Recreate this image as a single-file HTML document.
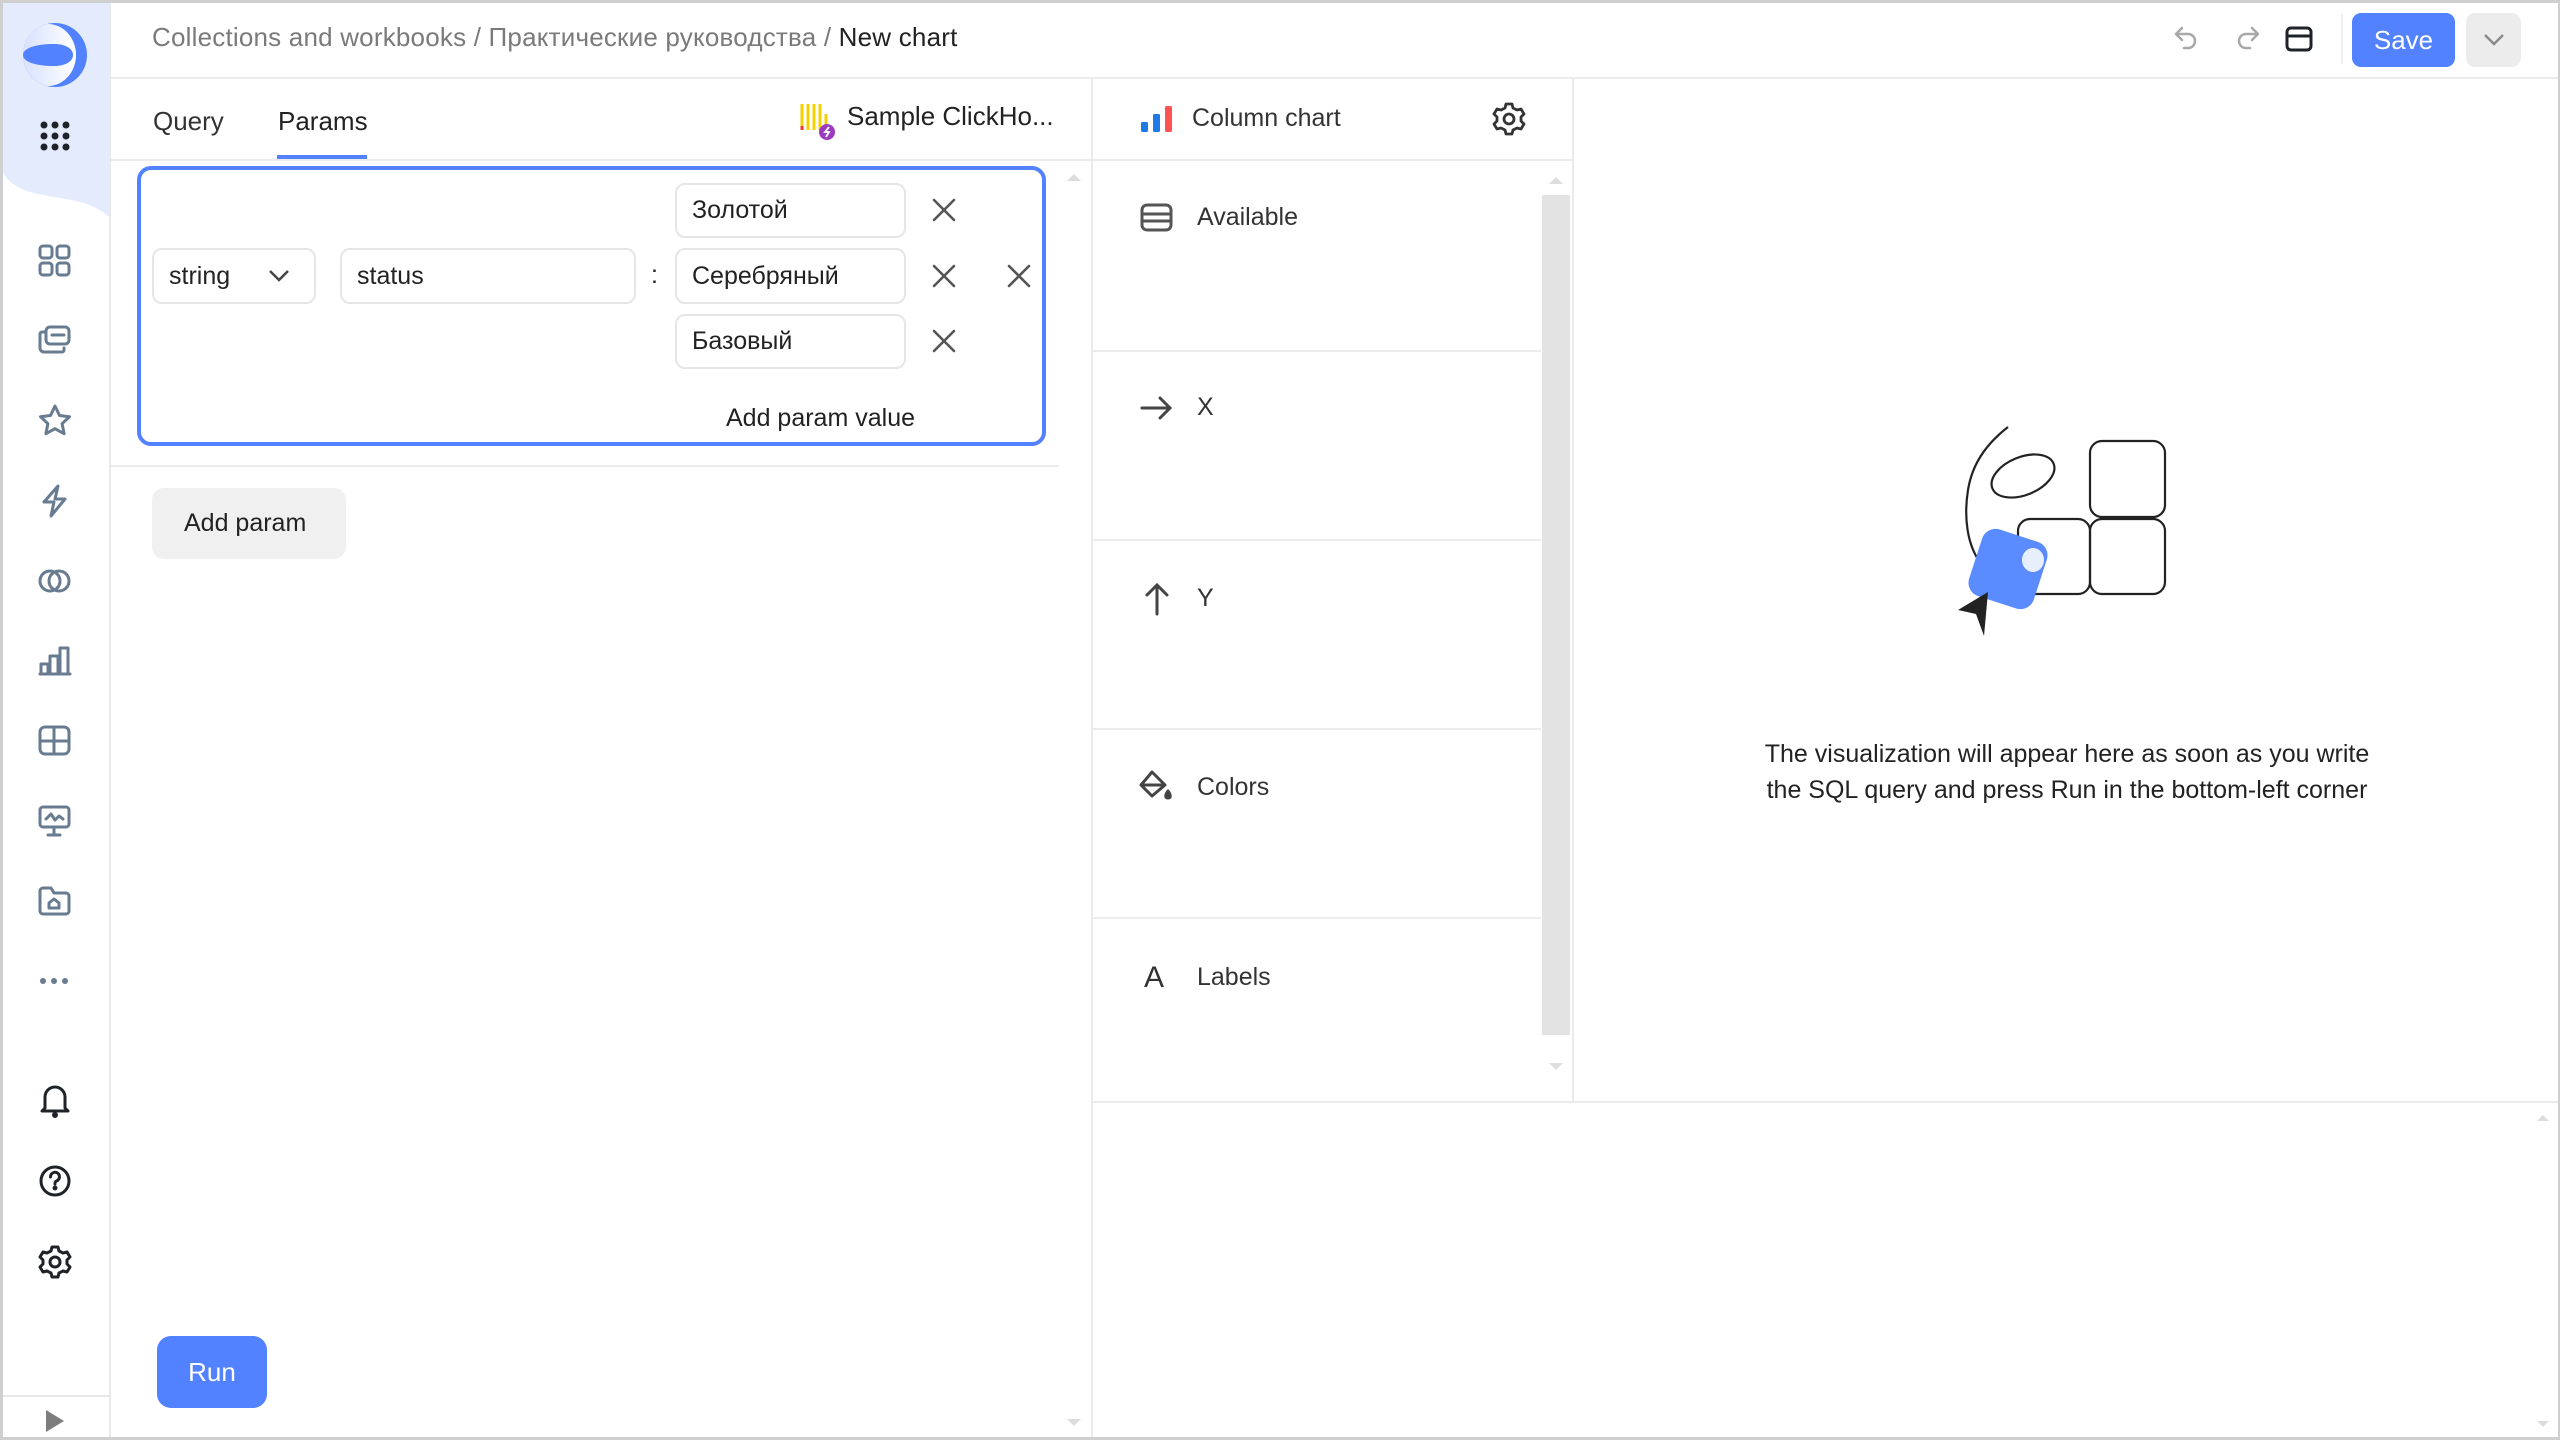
<!DOCTYPE html>
<html><head><meta charset="utf-8"><style>
*{box-sizing:border-box;margin:0;padding:0}
body{width:2560px;height:1440px;overflow:hidden;background:#fff;font-family:"Liberation Sans","Noto Sans CJK SC",sans-serif;color:#222;position:relative}
.frame{position:absolute;left:0;top:0;width:2560px;height:1440px;border:3px solid #cfcfcf;border-right-width:2px;pointer-events:none;z-index:50}
.a{position:absolute}
.t{position:absolute;white-space:nowrap;font-size:25px;line-height:1}
.inp{position:absolute;border:2px solid #e6e6e6;border-radius:10px;background:#fff}
.sec{position:absolute;left:1092px;width:449px;border-bottom:2px solid #ececec}
</style></head><body>
<div class="frame"></div>
<!-- sidebar -->
<div class="a" style="left:0;top:0;width:111px;height:1440px;border-right:2px solid #e8e8e8"></div>
<svg class="a" style="left:0;top:0" width="111" height="230"><path d="M0 0H110V218C90 198 60 200 30 192C10 186 3 175 0 165Z" fill="#e4ebfd"/></svg>
<svg class="a" style="left:22px;top:22px" width="66" height="66" viewBox="0 0 66 66"><defs><linearGradient id="g" x1="0" y1="0" x2="1" y2="0"><stop offset="0" stop-color="#d6e0ff"/><stop offset="1" stop-color="#ffffff"/></linearGradient><clipPath id="c"><circle cx="33" cy="33" r="32"/></clipPath></defs><circle cx="33" cy="33" r="32" fill="#5282ff"/><g clip-path="url(#c)"><ellipse cx="26" cy="33" rx="28" ry="31" fill="url(#g)"/></g><path d="M1 33C1 26 14 22 32 22C44 22 51 27 51 33C51 39 44 44 32 44C14 44 1 40 1 33Z" fill="#5282ff"/></svg>
<svg class="a" style="left:40px;top:121px" width="30" height="30"><g fill="#1f2328"><circle cx="4" cy="4" r="3.5"/><circle cx="15" cy="4" r="3.5"/><circle cx="26" cy="4" r="3.5"/><circle cx="4" cy="15" r="3.5"/><circle cx="15" cy="15" r="3.5"/><circle cx="26" cy="15" r="3.5"/><circle cx="4" cy="26" r="3.5"/><circle cx="15" cy="26" r="3.5"/><circle cx="26" cy="26" r="3.5"/></g></svg>
<svg class="a" style="left:38px;top:244px" width="34" height="1040" fill="none" stroke="#687c91" stroke-width="3" stroke-linecap="round" stroke-linejoin="round">
<rect x="2" y="2" width="12" height="12" rx="3"/><rect x="19" y="2" width="12" height="12" rx="3"/><rect x="2" y="19" width="12" height="12" rx="3"/><rect x="19" y="19" width="12" height="12" rx="3"/>
<g transform="translate(0,80)"><path d="M8 8H4a2 2 0 0 0-2 2v14a4 4 0 0 0 4 4h18a2 2 0 0 0 2-2v-2"/><rect x="8" y="3" width="23" height="17" rx="4"/><path d="M14 11H26"/></g>
<g transform="translate(0,160)"><path d="M17 2l4.5 9.5 10 1.2-7.4 7 2 10-9.1-5-9.1 5 2-10-7.4-7 10-1.2z"/></g>
<g transform="translate(0,240)"><path d="M20 2L6 18h10l-3 14 14-17H17l3-13z"/></g>
<g transform="translate(0,320)"><circle cx="12" cy="17" r="10"/><circle cx="21" cy="17" r="10"/></g>
<g transform="translate(0,400)"><path d="M3 30V20h7v10M12 30V12h8v18M22 30V4h8v26M2 30h30"/></g>
<g transform="translate(0,480)"><rect x="2" y="3" width="29" height="27" rx="5"/><path d="M2 17h29M16 3v27"/></g>
<g transform="translate(0,560)"><rect x="2" y="3" width="29" height="20" rx="3"/><path d="M8 15l5-5 4 6 4-4 4 3M16 23v7M10 31h12"/></g>
<g transform="translate(0,640)"><path d="M2 10V27a3 3 0 0 0 3 3h23a3 3 0 0 0 3-3V12a3 3 0 0 0-3-3H16l-3-5H5a3 3 0 0 0-3 3z"/><path d="M11 24v-5l5-4 5 4v5z"/></g>
<g transform="translate(0,720)" fill="#687c91" stroke="none"><circle cx="5" cy="17" r="3"/><circle cx="16" cy="17" r="3"/><circle cx="27" cy="17" r="3"/></g>
</svg>
<svg class="a" style="left:38px;top:1084px" width="34" height="200" fill="none" stroke="#1f2328" stroke-width="3" stroke-linecap="round" stroke-linejoin="round">
<path d="M7 24V13a10 10 0 0 1 20 0v11l3 3H4z"/><circle cx="17" cy="31" r="1.5" fill="#1f2328"/>
<g transform="translate(0,80)"><circle cx="17" cy="17" r="14"/><path d="M12.5 13a4.5 4.5 0 1 1 6 4c-1.5.6-1.5 1.5-1.5 3"/><circle cx="17" cy="24" r="1" fill="#1f2328"/></g>
<g transform="translate(0,160)"><path d="M14 3h6l1 4 4 2 4-1 3 5-3 3v4l3 3-3 5-4-1-4 2-1 4h-6l-1-4-4-2-4 1-3-5 3-3v-4l-3-3 3-5 4 1 4-2z"/><circle cx="17" cy="18" r="5"/></g>
</svg>
<div class="a" style="left:0;top:1395px;width:111px;height:2px;background:#e8e8e8"></div>
<svg class="a" style="left:46px;top:1410px" width="20" height="22"><path d="M0 0L18 11L0 22Z" fill="#7d7d7d"/></svg>
<!-- header -->
<div class="a" style="left:111px;top:77px;width:2449px;height:2px;background:#ebebeb"></div>
<div class="t" style="left:152px;top:24px;color:#7a7a7a;font-size:26px;letter-spacing:0.2px">Collections and workbooks / Практические руководства / <span style="color:#222">New chart</span></div>
<svg class="a" style="left:2172px;top:24px" width="150" height="30" fill="none" stroke-width="2.5" stroke-linecap="round" stroke-linejoin="round">
<path d="M6 10h10a7 7 0 0 1 0 14h-4M10 4L4 10l6 6" stroke="#a8a8a8"/>
<path d="M84 10H74a7 7 0 0 0 0 14h4M80 4l6 6-6 6" stroke="#a8a8a8"/>
<rect x="115" y="4" width="24" height="22" rx="4" stroke="#1f2328" stroke-width="3"/><path d="M115 12h24" stroke="#1f2328" stroke-width="3"/>
</svg>
<div class="a" style="left:2341px;top:14px;width:2px;height:50px;background:#eee"></div>
<div class="a" style="left:2352px;top:13px;width:103px;height:54px;background:#5282ff;border-radius:9px;color:#fff;font-size:26px;line-height:54px;text-align:center">Save</div>
<div class="a" style="left:2466px;top:13px;width:55px;height:54px;background:#ececec;border-radius:9px"></div>
<svg class="a" style="left:2483px;top:32px" width="22" height="16"><path d="M2 3l9 9 9-9" fill="none" stroke="#8a8a8a" stroke-width="2.5"/></svg>
<!-- left panel -->
<div class="a" style="left:1091px;top:79px;width:2px;height:1361px;background:#ebebeb"></div>
<div class="a" style="left:111px;top:159px;width:980px;height:2px;background:#ebebeb"></div>
<div class="t" style="left:153px;top:108px;font-size:26px;color:#333">Query</div>
<div class="t" style="left:278px;top:108px;font-size:26px;color:#222">Params</div>
<div class="a" style="left:277px;top:155px;width:90px;height:4px;background:#5282ff"></div>
<svg class="a" style="left:798px;top:100px" width="42" height="42"><g stroke-width="3"><path d="M4 4v26" stroke="#f5d000"/><path d="M4 26v4" stroke="#f33"/><path d="M10 4v26M16 4v26M22 4v26" stroke="#f5d000"/><path d="M28 14v16" stroke="#f5d000"/></g><circle cx="29" cy="32" r="8" fill="#9c3bbf"/><path d="M31 27l-4 5h4l-3 5" stroke="#fff" stroke-width="1.8" fill="none"/></svg>
<div class="t" style="left:847px;top:103px;font-size:26px">Sample ClickHo...</div>
<div class="a" style="left:137px;top:166px;width:909px;height:280px;border:4px solid #5282ff;border-radius:14px"></div>
<div class="inp" style="left:152px;top:248px;width:164px;height:56px"></div>
<div class="t" style="left:169px;top:264px">string</div>
<svg class="a" style="left:268px;top:268px" width="22" height="16"><path d="M2 3l9 9 9-9" fill="none" stroke="#444" stroke-width="2.5"/></svg>
<div class="inp" style="left:340px;top:248px;width:296px;height:56px"></div>
<div class="t" style="left:357px;top:264px">status</div>
<div class="t" style="left:651px;top:263px">:</div>
<div class="inp" style="left:675px;top:183px;width:231px;height:55px"></div>
<div class="t" style="left:692px;top:198px">Золотой</div>
<div class="inp" style="left:675px;top:248px;width:231px;height:56px"></div>
<div class="t" style="left:692px;top:264px">Серебряный</div>
<div class="inp" style="left:675px;top:314px;width:231px;height:55px"></div>
<div class="t" style="left:692px;top:329px">Базовый</div>
<svg class="a" style="left:930px;top:196px" width="30" height="200" stroke="#555" stroke-width="2.6" stroke-linecap="round"><path d="M4 4l20 20M24 4L4 24"/><path d="M4 70l20 20M24 70L4 90"/><path d="M4 135l20 20M24 135L4 155"/></svg>
<svg class="a" style="left:1005px;top:262px" width="30" height="30" stroke="#555" stroke-width="2.6" stroke-linecap="round"><path d="M4 4l20 20M24 4L4 24"/></svg>
<div class="t" style="left:726px;top:406px">Add param value</div>
<div class="a" style="left:111px;top:465px;width:948px;height:2px;background:#ebebeb"></div>
<div class="a" style="left:152px;top:488px;width:194px;height:71px;background:#f0f0f0;border-radius:12px"></div>
<div class="t" style="left:184px;top:511px">Add param</div>
<div class="a" style="left:157px;top:1336px;width:110px;height:72px;background:#5282ff;border-radius:14px;color:#fff;font-size:26px;line-height:72px;text-align:center">Run</div>
<svg class="a" style="left:1066px;top:172px" width="16" height="10"><path d="M1 9L8 2L15 9Z" fill="#ddd"/></svg>
<svg class="a" style="left:1066px;top:1418px" width="16" height="10"><path d="M1 1L8 8L15 1Z" fill="#ddd"/></svg>
<!-- middle panel -->
<div class="a" style="left:1572px;top:79px;width:2px;height:1023px;background:#ebebeb"></div>
<div class="a" style="left:1092px;top:159px;width:480px;height:2px;background:#ebebeb"></div>
<svg class="a" style="left:1140px;top:104px" width="34" height="30"><rect x="1" y="18" width="7" height="10" rx="1.5" fill="#1e7ae6"/><rect x="13" y="10" width="7" height="18" rx="1.5" fill="#1e7ae6"/><rect x="25" y="2" width="7" height="26" rx="1.5" fill="#ff5353"/></svg>
<div class="t" style="left:1192px;top:106px;color:#333">Column chart</div>
<svg class="a" style="left:1492px;top:102px" width="34" height="34" fill="none" stroke="#333" stroke-width="2.8" stroke-linejoin="round"><path d="M14 2h6l1 4 4 2 4-1 3 5-3 3v4l3 3-3 5-4-1-4 2-1 4h-6l-1-4-4-2-4 1-3-5 3-3v-4l-3-3 3-5 4 1 4-2z"/><circle cx="17" cy="17" r="5"/></svg>
<div class="sec" style="top:161px;height:191px"></div>
<div class="sec" style="top:352px;height:189px"></div>
<div class="sec" style="top:541px;height:189px"></div>
<div class="sec" style="top:730px;height:189px"></div>
<div class="a" style="left:1542px;top:195px;width:28px;height:840px;background:#e3e3e3"></div>
<svg class="a" style="left:1548px;top:175px" width="16" height="10"><path d="M1 9L8 2L15 9Z" fill="#ddd"/></svg>
<svg class="a" style="left:1548px;top:1062px" width="16" height="10"><path d="M1 1L8 8L15 1Z" fill="#ddd"/></svg>
<svg class="a" style="left:1140px;top:203px" width="34" height="30" fill="none" stroke="#555" stroke-width="3"><rect x="2" y="2" width="29" height="25" rx="5"/><path d="M2 11h29M2 18h29"/></svg>
<div class="t" style="left:1197px;top:205px;color:#333">Available</div>
<svg class="a" style="left:1140px;top:393px" width="34" height="30" fill="none" stroke="#444" stroke-width="3" stroke-linecap="round"><path d="M2 15h28M20 5l10 10-10 10"/></svg>
<div class="t" style="left:1197px;top:395px;color:#333">X</div>
<svg class="a" style="left:1142px;top:582px" width="30" height="34" fill="none" stroke="#444" stroke-width="3" stroke-linecap="round"><path d="M15 32V3M5 13L15 3l10 10"/></svg>
<div class="t" style="left:1197px;top:586px;color:#333">Y</div>
<svg class="a" style="left:1138px;top:769px" width="36" height="36" fill="none" stroke="#444" stroke-width="3" stroke-linejoin="round"><path d="M14 3L3 16l11 11 13-11z"/><path d="M3 16h24"/><path d="M30 22c-3 4-3 7 0 7s3-3 0-7z" fill="#444"/></svg>
<div class="t" style="left:1197px;top:775px;color:#333">Colors</div>
<div class="t" style="left:1144px;top:963px;font-size:30px;color:#333">A</div>
<div class="t" style="left:1197px;top:965px;color:#333">Labels</div>
<div class="a" style="left:1092px;top:1101px;width:1468px;height:2px;background:#ebebeb"></div>
<svg class="a" style="left:2536px;top:1114px" width="14" height="8"><path d="M1 7L7 1L13 7Z" fill="#ddd"/></svg>
<svg class="a" style="left:2536px;top:1420px" width="14" height="8"><path d="M1 1L7 7L13 1Z" fill="#ddd"/></svg>
<!-- illustration -->
<svg class="a" style="left:1940px;top:420px" width="240" height="220" fill="none" stroke="#222" stroke-width="2.2">
<rect x="150" y="21" width="75" height="76" rx="12"/><rect x="150" y="99" width="75" height="75" rx="12"/><rect x="78" y="99" width="72" height="75" rx="12"/>
<path d="M68 7C45 25 32 45 28 70C24 95 26 125 42 145"/>
<ellipse cx="83" cy="56" rx="33" ry="19" transform="rotate(-22 83 56)"/>
<rect x="34" y="114" width="68" height="70" rx="14" fill="#5a8bff" stroke="none" transform="rotate(18 68 149)"/>
<ellipse cx="93" cy="140" rx="11" ry="12" fill="#e8efff" stroke="none"/>
<path d="M48 172L18 190l18 4 8 22z" fill="#222" stroke="none"/>
</svg>
<div class="t" style="left:1600px;top:736px;width:934px;text-align:center;color:#222;font-size:25px;line-height:36px;white-space:normal">The visualization will appear here as soon as you write<br>the SQL query and press Run in the bottom-left corner</div>
</body></html>
